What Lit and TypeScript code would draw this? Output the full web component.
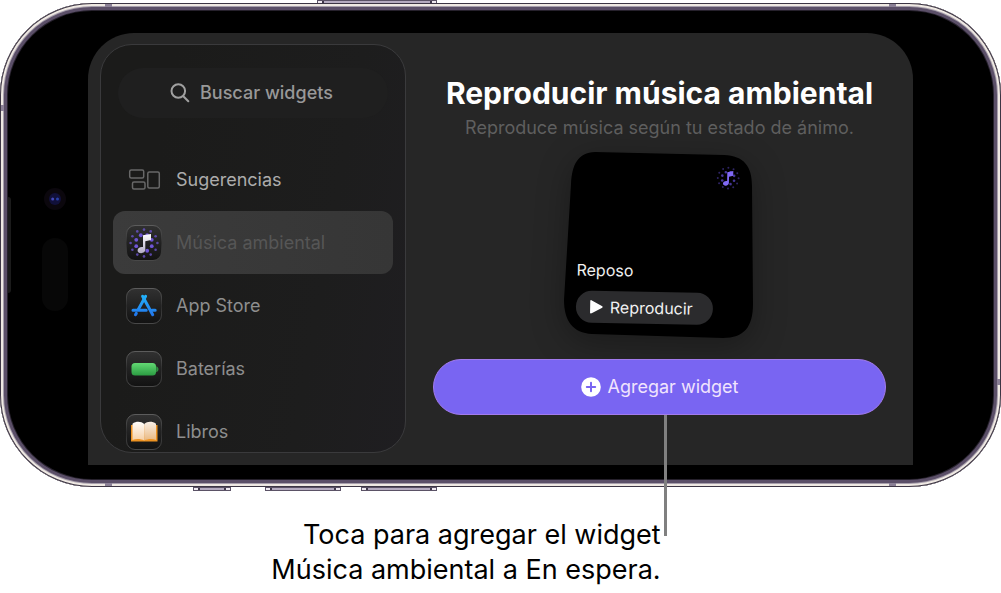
import { LitElement, html, css, svg } from "lit";
import { customElement, property, state } from "lit/decorators.js";

type IconName = "suggestions" | "ambient" | "store" | "battery" | "books";

const dots = (cx: number, cy: number, rings: number[][], fill: string) =>
  rings.flatMap(([count, radius, size, phase, opacity]) =>
    Array.from({ length: count }, (_, i) => {
      const a = ((i + phase) / count) * Math.PI * 2;
      return svg`<circle cx=${cx + Math.cos(a) * radius} cy=${cy + Math.sin(a) * radius} r=${size} fill=${fill} opacity=${opacity} />`;
    })
  );

@customElement("app-icon")
export class AppIcon extends LitElement {
  @property() name: IconName = "suggestions";

  static styles = css`
    :host {
      display: block;
      flex: none;
      width: 36px;
      height: 36px;
    }
    svg {
      display: block;
    }
  `;

  private glyph() {
    switch (this.name) {
      case "ambient":
        return svg`
          ${dots(18, 18, [[12, 13.4, 1.3, 0, 0.75], [8, 8.4, 1.9, 0.5, 1]], "#6f55d6")}
          <path d="M17 10.300 25 9v6l-5.700 1.300v8.300c0 2.200-1.800 3.600-4.200 3.600-2.100 0-3.500-1-3.500-2.700 0-2 1.800-3.400 4.400-3.400h1z" fill="url(#note)" />`;
      case "store":
        return svg`
          <g stroke="url(#sky)" stroke-width="3" stroke-linecap="round" fill="none">
            <path d="M16.600 8.300 26.700 26.700" />
            <path d="M19.600 8.300 12.300 21.500" />
            <path d="M10.300 25.400 9.500 26.700" />
            <path d="M7 22.200H20.200M25.800 22.200H29.200" />
          </g>`;
      case "battery":
        return svg`
          <path d="M30.200 15.200c3 .8 3 5.200 0 6z" fill="#2f8f42" />
          <rect x="5.500" y="12" width="24.500" height="12.500" rx="3.500" fill="url(#green)" />`;
      case "books":
        return svg`
          <path d="M5 11h26.500v16.500H5z" fill="#ee9322" />
          <path d="M6.500 9.800c3.500-2.600 8.500-2.600 11.700.2v16.500c-3.200-1.800-8.200-2-11.700-.6z" fill="url(#page)" />
          <path d="M30 9.800c-3.500-2.600-8.500-2.600-11.800.2v16.500c3.300-1.800 8.300-2 11.800-.6z" fill="url(#page2)" />`;
      default:
        return svg``;
    }
  }

  render() {
    if (this.name === "suggestions") {
      return html`<svg width="36" height="36" viewBox="0 0 36 36" fill="none" stroke="#686868" stroke-width="1.5" aria-hidden="true">
        <rect x="3.700" y="8" width="14" height="8" rx="1.500" />
        <rect x="6.500" y="20" width="12.500" height="7" rx="1.500" />
        <rect x="21.800" y="10" width="11.500" height="16" rx="1.500" />
      </svg>`;
    }
    return html`<svg width="36" height="36" viewBox="0 0 36 36" aria-hidden="true">
      <defs>
        <linearGradient id="tile" x2="0" y2="1"><stop stop-color="#313131" /><stop offset="1" stop-color="#121212" /></linearGradient>
        <linearGradient id="rim" x2="0" y2="1"><stop stop-color="#5c5c5c" /><stop offset=".5" stop-color="#2c2c2c" /><stop offset="1" stop-color="#484848" /></linearGradient>
        <linearGradient id="note" x2="0" y2="1"><stop stop-color="#fff" /><stop offset="1" stop-color="#b3adc6" /></linearGradient>
        <linearGradient id="sky" gradientUnits="userSpaceOnUse" x1="18" y1="6" x2="18" y2="29"><stop stop-color="#22b7fb" /><stop offset="1" stop-color="#2272ec" /></linearGradient>
        <linearGradient id="green" x2="0" y2="1"><stop stop-color="#62d873" /><stop offset="1" stop-color="#2b9c42" /></linearGradient>
        <linearGradient id="page" x2="0" y2="1"><stop stop-color="#fffdfb" /><stop offset="1" stop-color="#f5cfa4" /></linearGradient>
        <linearGradient id="page2" x2="0" y2="1"><stop stop-color="#f8eee5" /><stop offset="1" stop-color="#eab981" /></linearGradient>
      </defs>
      <rect x=".5" y=".5" width="35" height="35" rx="8.500" fill="url(#tile)" stroke="url(#rim)" />
      ${this.glyph()}
    </svg>`;
  }
}

@customElement("widget-sidebar")
export class WidgetSidebar extends LitElement {
  @state() private selected = "Música ambiental";

  private items: { label: string; icon: IconName; bright?: boolean }[] = [
    { label: "Sugerencias", icon: "suggestions", bright: true },
    { label: "Música ambiental", icon: "ambient" },
    { label: "App Store", icon: "store" },
    { label: "Baterías", icon: "battery" },
    { label: "Libros", icon: "books" },
  ];

  static styles = css`
    :host {
      box-sizing: border-box;
      display: flex;
      flex-direction: column;
      gap: 30px;
      padding-top: 23px;
      border: 1px solid #3a3a3c;
      border-radius: 32px;
      background: linear-gradient(100deg, #1b1b1a 20%, #1d1d1d 70%, #1f1e21);
      overflow: hidden;
    }
    .search {
      display: flex;
      align-items: center;
      justify-content: center;
      gap: 10px;
      height: 50px;
      margin: 0 17px;
      border-radius: 25px;
      background: #1f1f1f;
    }
    .search svg {
      flex: none;
    }
    .query {
      width: 136px;
      padding: 0;
      border: 0;
      outline: 0;
      background: none;
      color: #a0a0a0;
      font: 500 18px/24px Inter, sans-serif;
    }
    .query::placeholder {
      color: #989898;
      opacity: 1;
    }
    .list {
      flex: 1;
      contain: size;
      margin: 0;
      padding: 0 12px;
      list-style: none;
      overflow: hidden;
    }
    .row {
      display: flex;
      align-items: center;
      gap: 14px;
      width: 100%;
      height: 63px;
      padding: 0 13px;
      border: 0;
      border-radius: 12px;
      background: none;
      color: #8e8e8e;
      font: 400 18px/24px Inter, sans-serif;
      text-align: left;
    }
    .bright {
      color: #acacac;
    }
    .selected {
      background: linear-gradient(90deg, #3b3b3b, #363636);
      color: #565656;
    }
  `;

  render() {
    return html`
      <label class="search">
        <svg width="20" height="20" viewBox="0 0 20 20" fill="none" stroke="#a0a0a0" stroke-width="2" stroke-linecap="round" aria-hidden="true">
          <circle cx="8.300" cy="8" r="6.800" />
          <path d="M13.300 13.200 18.300 18.200" />
        </svg>
        <input class="query" type="text" placeholder="Buscar widgets" aria-label="Buscar widgets" />
      </label>
      <ul class="list">
        ${this.items.map(
          (item) => html`<li>
            <button
              class="row ${item.bright ? "bright" : ""} ${item.label === this.selected ? "selected" : ""}"
              @click=${() => (this.selected = item.label)}
            >
              <app-icon name=${item.icon}></app-icon>${item.label}
            </button>
          </li>`
        )}
      </ul>
    `;
  }
}

@customElement("ambient-preview")
export class AmbientPreview extends LitElement {
  static styles = css`
    :host {
      display: grid;
      width: 190px;
      height: 187px;
      font: 400 16px/22px Inter, sans-serif;
      color: #f0f0f0;
    }
    .shape,
    .content {
      grid-area: 1 / 1;
    }
    .shape {
      overflow: visible;
      filter: drop-shadow(0 8px 16px rgba(0, 0, 0, 0.3));
    }
    .content {
      z-index: 1;
      display: flex;
      flex-direction: column;
      align-items: flex-start;
      justify-content: space-between;
      padding: 13px 16px 15px 12px;
      transform: rotate(1deg);
    }
    .note {
      align-self: flex-end;
    }
    .controls {
      display: grid;
      gap: 10px;
      justify-items: start;
    }
    .play {
      display: flex;
      align-items: center;
      gap: 7px;
      height: 32px;
      padding: 0 20px 0 14px;
      border: 0;
      border-radius: 16px;
      background: #2b2b2d;
      color: #f2f2f2;
      font: inherit;
    }
  `;

  render() {
    return html`
      <svg class="shape" width="190" height="187" viewBox="0 0 190 187" aria-hidden="true">
        <path d="M30 0 159 3C179 4 187 14 187 34L188 152C188 175 179 186 158 186L27 182C8 181 -1 169 -1 148L6 32C7 12 13 1 30 0Z" />
      </svg>
      <div class="content">
        <svg class="note" width="24" height="24" viewBox="0 0 24 24" aria-hidden="true">
          ${dots(12, 12, [[12, 10.4, 1, 0, 0.5], [8, 6.4, 1.3, 0.5, 0.75]], "#5c48c8")}
          <path d="M11 6 17 4.800v4.800l-4.200 1v6c0 1.800-1.400 2.900-3.200 2.900-1.600 0-2.700-.8-2.700-2.100 0-1.600 1.400-2.500 3.400-2.500h.7z" fill="#8069f4" />
        </svg>
        <div class="controls">
          <span>Reposo</span>
          <button class="play">
            <svg width="13" height="14" viewBox="0 0 13 14" aria-hidden="true">
              <path d="M1 1 12 7 1 13Z" fill="#fff" stroke="#fff" stroke-width="1.500" stroke-linejoin="round" />
            </svg>
            Reproducir
          </button>
        </div>
      </div>
    `;
  }
}

@customElement("app-root")
export class AppRoot extends LitElement {
  static styles = css`
    :host {
      display: block;
      min-height: 100vh;
      background: #fff;
      color: #000;
      font-family: Inter, sans-serif;
    }
    .keys {
      display: flex;
    }
    .keys-top {
      padding-left: 317px;
    }
    .keys-bottom {
      padding-left: 193px;
    }
    .key {
      box-sizing: border-box;
      height: 4px;
      border: 1px solid #5b5266;
      background: #b5abc0;
      box-shadow: inset 4px 0 #efe9f0, inset -4px 0 #efe9f0, inset 6px 0 #40384a, inset -6px 0 #40384a;
    }
    .keys-top .key {
      width: 120px;
      height: 3px;
      border-bottom: 0;
    }
    .action {
      width: 38px;
      margin-right: 34px;
    }
    .volume {
      width: 76px;
      margin-right: 20px;
    }
    .phone {
      position: relative;
      display: grid;
      grid-template-columns: 80px 1fr 80px;
      padding: 22px 0 14px;
      border: 8px solid transparent;
      border-radius: 92px;
      background: #000;
      background-clip: border-box;
    }
    .rim {
      position: absolute;
      inset: -8px;
      border-radius: 92px;
      box-shadow: inset 0 0 0 1px #3c3544, inset 0 0 0 3px #efe9e3, inset 0 0 0 4px #a79fac, inset 0 0 0 7px #5b4f68,
        inset 0 0 0 8px #26212c;
      pointer-events: none;
    }
    .band {
      position: absolute;
      width: 7px;
      height: 3px;
      background: #8b8096;
    }
    .band.top {
      top: -7px;
    }
    .band.bottom {
      bottom: -7px;
    }
    .band.near {
      left: 97px;
    }
    .band.far {
      right: 97px;
    }
    .band.left,
    .band.right {
      width: 3px;
      height: 6px;
    }
    .band.left {
      left: -7px;
      top: 94px;
    }
    .band.right {
      right: -7px;
      bottom: 94px;
    }
    .side {
      display: grid;
      grid-template-columns: 3px 1fr;
      align-items: center;
      margin-top: -8px;
    }
    .slot {
      height: 96px;
      border-radius: 0 3px 3px 0;
      background: #1b1b1b;
    }
    .island {
      display: grid;
      gap: 28px;
      justify-items: center;
      margin: 8px 0 0 11px;
    }
    .speaker {
      width: 26px;
      height: 73px;
      border-radius: 13px;
      background: #070707;
    }
    .screen {
      display: grid;
      grid-template-columns: 306px 1fr;
      padding: 11px 0 12px 12px;
      border-radius: 46px 46px 0 0;
      background: #262626;
    }
    .main {
      display: flex;
      flex-direction: column;
      align-items: center;
      padding: 30px 27px 38px;
    }
    .title {
      margin: 0;
      color: #fff;
      font-size: 30px;
      font-weight: 700;
      line-height: 38px;
      white-space: nowrap;
    }
    .subtitle {
      margin: 4px 0 12px;
      color: #5f5f5f;
      font-size: 18px;
      line-height: 24px;
      white-space: nowrap;
    }
    .cta {
      position: relative;
      align-self: stretch;
      margin-top: 20px;
    }
    .add {
      display: flex;
      align-items: center;
      justify-content: center;
      gap: 7px;
      width: 100%;
      height: 56px;
      border: 1px solid #a27bec;
      border-radius: 28px;
      background: #7965f2;
      color: #f1e4fd;
      font: 400 18px/24px Inter, sans-serif;
    }
    .leader {
      position: absolute;
      z-index: 1;
      top: 100%;
      left: 51%;
      width: 3px;
      height: 121px;
      background: #808080;
    }
    .caption {
      width: 66%;
      margin: 26px 0 0;
      font-size: 27px;
      line-height: 35px;
      text-align: right;
      white-space: nowrap;
    }
  `;

  render() {
    return html`
      <div class="keys keys-top"><span class="key"></span></div>
      <div class="phone">
        <div class="side" aria-hidden="true">
          <span class="slot"></span>
          <div class="island">
            <svg width="22" height="22" viewBox="0 0 22 22">
              <circle cx="11" cy="11" r="11" fill="#0b070d" />
              <circle cx="11" cy="11" r="6" fill="#11103a" />
              <circle cx="8.700" cy="11" r="1.500" fill="#4349b8" />
              <circle cx="13.500" cy="11" r="1.500" fill="#2740a8" />
            </svg>
            <span class="speaker"></span>
          </div>
        </div>
        <div class="screen">
          <widget-sidebar></widget-sidebar>
          <main class="main">
            <h1 class="title">Reproducir música ambiental</h1>
            <p class="subtitle">Reproduce música según tu estado de ánimo.</p>
            <ambient-preview></ambient-preview>
            <div class="cta">
              <button class="add">
                <svg width="20" height="20" viewBox="0 0 20 20" aria-hidden="true">
                  <circle cx="10" cy="10" r="9.800" fill="#fff" />
                  <path d="M10 5.800v8.400M5.800 10h8.400" stroke="#7965f2" stroke-width="2" stroke-linecap="round" />
                </svg>
                Agregar widget
              </button>
              <span class="leader"></span>
            </div>
          </main>
        </div>
        <span class="rim"></span>
        <span class="band top near"></span>
        <span class="band top far"></span>
        <span class="band bottom near"></span>
        <span class="band bottom far"></span>
        <span class="band left"></span>
        <span class="band right"></span>
      </div>
      <div class="keys keys-bottom">
        <span class="key action"></span>
        <span class="key volume"></span>
        <span class="key volume"></span>
      </div>
      <p class="caption">Toca para agregar el widget<br />Música ambiental a En espera.</p>
    `;
  }
}
